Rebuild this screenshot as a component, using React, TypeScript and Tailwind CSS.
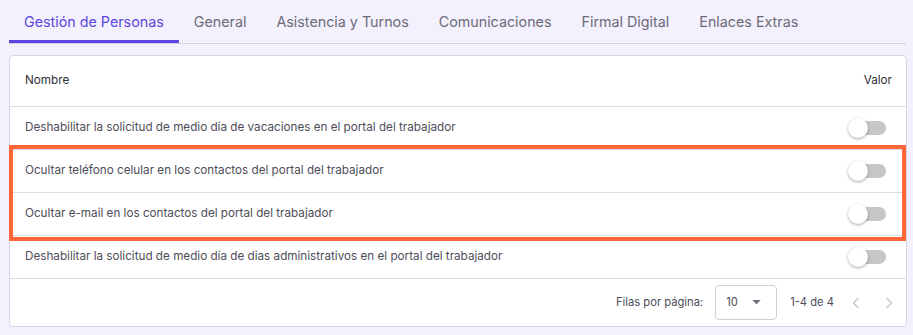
import React from "react";

const tabs = [
  "Gestión de Personas",
  "General",
  "Asistencia y Turnos",
  "Comunicaciones",
  "Firmal Digital",
  "Enlaces Extras",
];

const rows = [
  "Deshabilitar la solicitud de medio día de vacaciones en el portal del trabajador",
  "Ocultar teléfono celular en los contactos del portal del trabajador",
  "Ocultar e-mail en los contactos del portal del trabajador",
  "Deshabilitar la solicitud de medio día de dias administrativos en el portal del trabajador",
];

function Toggle() {
  return (
    <div className="relative w-[38px] h-[20px] flex items-center">
      <div className="absolute left-[4px] right-0 h-[14px] rounded-full bg-[#c6c6c6]" />
      <div className="absolute left-0 top-0 w-[20px] h-[20px] rounded-full bg-white shadow-[0_1px_3px_rgba(0,0,0,0.35)]" />
    </div>
  );
}

export default function App() {
  return (
    <div
      className="w-[913px] h-[335px] bg-[#f3f1fd] relative overflow-hidden"
      style={{ fontFamily: "Inter, 'Noto Sans', sans-serif" }}
    >
      <div className="pl-[9px] pr-[7px]">
        <div className="flex border-b border-[#d3d1e0] h-[44px]">
          {tabs.map((t, i) => (
            <div
              key={t}
              className={
                "px-[15px] flex items-center text-[14.3px] " +
                (i === 0
                  ? "text-[#5b47e0] border-b-[3px] border-[#5b47e0] pt-[3px]"
                  : "text-[#6d6b78] pt-[3px] pb-[3px]")
              }
            >
              {t}
            </div>
          ))}
        </div>
      </div>
      <div className="mt-[11px] ml-[9px] mr-[6px] bg-white border border-[#d6d5e3] rounded-[4px]">
        <div className="h-[51px] flex items-center justify-between pl-[15px] pr-[14px] border-b border-[#d9dbe7] text-[11.7px] text-[#2f2f38]">
          <span>Nombre</span>
          <span>Valor</span>
        </div>
        {rows.map((r) => (
          <div
            key={r}
            className="h-[43px] flex items-center justify-between pl-[15px] pr-[20px] border-b border-[#d9dbe7] text-[11.7px] text-[#4e4d5a]"
          >
            <span>{r}</span>
            <Toggle />
          </div>
        ))}
        <div className="h-[47px] flex items-center justify-end text-[11.2px] text-[#4e4d5a] pr-[7px]">
          <span className="mr-[12px]">Filas por página:</span>
          <div className="w-[62px] h-[35px] border border-[#cfcfd8] rounded-[4px] flex items-center justify-between pl-[10px] pr-[15px] mr-[13px]">
            <span>10</span>
            <svg width="9" height="5" viewBox="0 0 10 6">
              <path d="M0 0 L10 0 L5 5 Z" fill="#6b6b75" />
            </svg>
          </div>
          <span className="mr-[12px]">1-4 de 4</span>
          <svg width="20" height="20" viewBox="0 0 24 24" className="mr-[13px]">
            <path d="M15 6 L9 12 L15 18" stroke="#c3c3cc" strokeWidth="1.6" fill="none" />
          </svg>
          <svg width="20" height="20" viewBox="0 0 24 24">
            <path d="M9 6 L15 12 L9 18" stroke="#c3c3cc" strokeWidth="1.6" fill="none" />
          </svg>
        </div>
      </div>
      <div className="absolute left-[9px] top-[145px] w-[897px] h-[96px] border-[4px] border-[#ff6536] pointer-events-none" />
    </div>
  );
}
